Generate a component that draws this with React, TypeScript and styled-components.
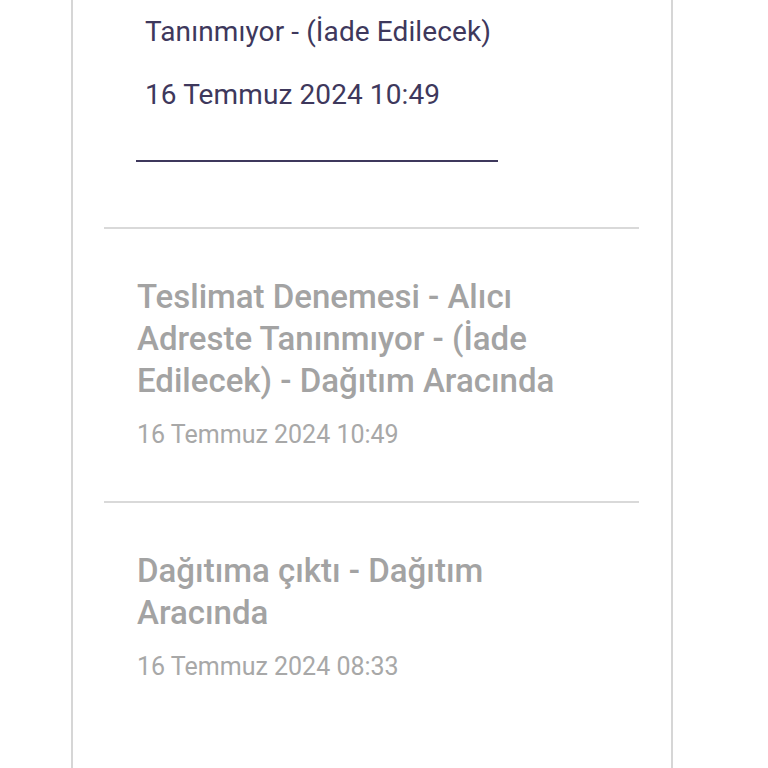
import React from "react";
import styled, { createGlobalStyle } from "styled-components";

const Global = createGlobalStyle`
  html, body { margin: 0; padding: 0; background: #ffffff; }
  body { font-family: Roboto, "Noto Sans", "Liberation Sans", sans-serif; }
`;

const Page = styled.div`
  width: 768px;
  height: 768px;
  overflow: hidden;
  background: #ffffff;
`;

const Card = styled.div`
  margin-left: 71px;
  width: 535px;
  min-height: 800px;
  border-left: 2px solid #d6d6d6;
  border-right: 2px solid #d6d6d6;
  padding: 0 32px 0 31px;
  box-sizing: content-box;
`;

const Active = styled.section`
  padding: 14px 0 0 41px;
  display: flex;
  flex-direction: column;
`;

const ActiveText = styled.div<{ $gap?: number }>`
  font-size: 28px;
  letter-spacing: 0.1px;
  line-height: 36px;
  color: #3e385c;
  margin-top: ${(p) => p.$gap ?? 0}px;
`;

const Underline = styled.div`
  width: 362px;
  height: 2px;
  background: #3e385c;
  margin: 47px 0 0 -9px;
`;

const Divider = styled.hr<{ $top: number }>`
  border: none;
  height: 2px;
  background: #d9d9d9;
  margin: ${(p) => p.$top}px 0 0 0;
`;

const Item = styled.section`
  padding: 47px 0 0 33px;
  display: flex;
  flex-direction: column;
`;

const ItemTitle = styled.div`
  font-size: 33px;
  line-height: 42px;
  color: #a3a3a3;
  font-weight: 500;
  max-width: 440px;
`;

const ItemDate = styled.div`
  font-size: 25px;
  line-height: 30px;
  color: #a8a8a8;
  margin-top: 18px;
`;

export default function App() {
  return (
    <Page>
      <Global />
      <Card>
        <Active>
          <ActiveText>Tanınmıyor - (İade Edilecek)</ActiveText>
          <ActiveText $gap={27}>16 Temmuz 2024 10:49</ActiveText>
          <Underline />
        </Active>
        <Divider $top={65} />
        <Item>
          <ItemTitle>Teslimat Denemesi - Alıcı Adreste Tanınmıyor - (İade Edilecek) - Dağıtım Aracında</ItemTitle>
          <ItemDate>16 Temmuz 2024 10:49</ItemDate>
        </Item>
        <Divider $top={51} />
        <Item>
          <ItemTitle>Dağıtıma çıktı - Dağıtım Aracında</ItemTitle>
          <ItemDate>16 Temmuz 2024 08:33</ItemDate>
        </Item>
      </Card>
    </Page>
  );
}
